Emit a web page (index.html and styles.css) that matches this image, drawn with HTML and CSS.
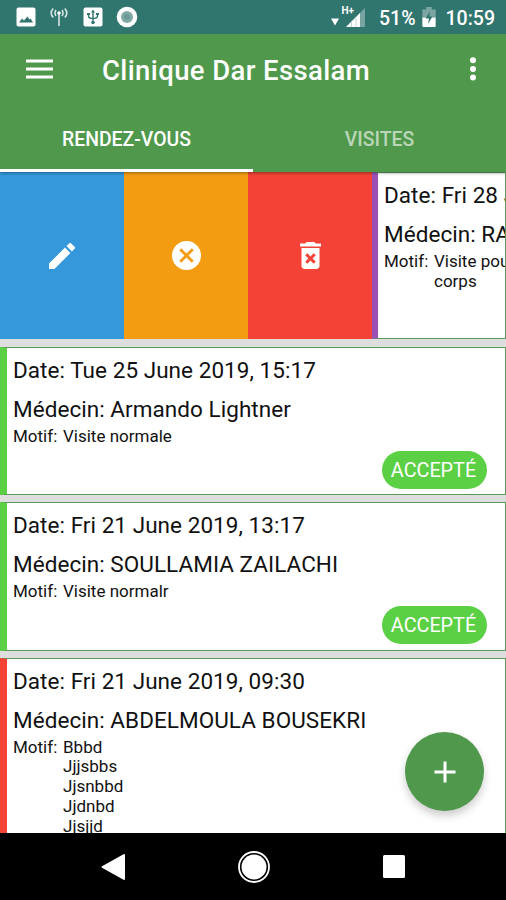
FILE: index.html
```html
<!DOCTYPE html>
<html lang="fr">
<head>
<meta charset="utf-8">
<title>Clinique Dar Essalam</title>
<link rel="stylesheet" href="styles.css">
</head>
<body>
<div class="screen">
  <header class="status">
    <div class="status-left">
      <svg width="20" height="20" viewBox="0 0 20 20"><rect x=".5" y=".5" width="19" height="19" rx="2" fill="#fff"/><path d="M3 15.500l3-4 2 2 3.500-4 2 3 1-1 2.500 4z" fill="#31756f"/></svg>
      <svg class="antenna" width="18" height="20" viewBox="0 0 18 20" fill="none" stroke="#d5e5e3" stroke-width="1.600"><path d="M9 6v13M6 3q-2 3 0 6M3.200 1.500q-4 4.500 0 9M12 3q2 3 0 6M14.800 1.500q4 4.500 0 9"/><circle cx="9" cy="6" r="1.800" fill="#fff" stroke="none"/></svg>
      <svg class="usb" width="20" height="20" viewBox="0 0 20 20"><rect x=".5" y=".5" width="19" height="19" rx="2" fill="#fff"/><path d="M10 4v11M5.500 6v3q0 2.500 4.500 2.500t4.500-2.500V6" fill="none" stroke="#31756f" stroke-width="1.400"/><path d="M8 5.500L10 2.500l2 3zM4 6h3v2H4zM13 6h3v2h-3z" fill="#31756f"/><circle cx="10" cy="15.500" r="1.800" fill="#31756f"/></svg>
      <svg class="disc" width="22" height="22" viewBox="0 0 22 22"><circle cx="11" cy="11" r="10.300" fill="#fff"/><circle cx="11" cy="11" r="6" fill="#82aaa6"/><circle cx="11" cy="11" r="3" fill="#6d9b97"/></svg>
    </div>
    <div class="status-right">
      <svg class="signal" width="36" height="24" viewBox="0 0 36 24"><path d="M0 13.500h8l-4 7z" fill="#fff"/><path d="M15 22L34 3v19z" fill="#78a3a0"/><path d="M15 22L29 8v14z" fill="#fff"/><path d="M20.500 16v6M25 12v10" stroke="#c0d5d3" stroke-width="1"/><text x="10.500" y="9" class="network">H+</text></svg>
      <span class="percent">51%</span>
      <svg class="battery" width="14" height="20" viewBox="0 0 14 21"><path d="M4 0h6v2.500h4V11H0V2.500h4z" fill="#7ba5a2"/><path d="M0 11h14v9q0 1-1 1H1q-1 0-1-1z" fill="#fff"/><path d="M8 4.500L3.500 12H7l-1 6 4.500-8H7.500z" fill="#31756f"/></svg>
      <span class="clock">10:59</span>
    </div>
  </header>
  <div class="appbar">
    <svg class="menu" width="27" height="20" viewBox="0 0 27 20"><path d="M0 2h27M0 10h27M0 18h27" stroke="#fff" stroke-width="2.800"/></svg>
    <h1 class="title">Clinique Dar Essalam</h1>
    <svg class="more" width="8" height="24" viewBox="0 0 8 24" fill="#fff"><circle cx="4" cy="3.300" r="3"/><circle cx="4" cy="12" r="3"/><circle cx="4" cy="20.500" r="3"/></svg>
  </div>
  <nav class="tabs">
    <div class="tab active">RENDEZ-VOUS</div>
    <div class="tab">VISITES</div>
  </nav>
  <main class="list">
    <section class="swipe">
      <div class="action edit"><svg width="26" height="26" viewBox="3 3 18 18" fill="#fff"><path d="M3 17.250V21h3.750L17.810 9.940l-3.750-3.750zM20.710 7.040a1 1 0 0 0 0-1.410l-2.340-2.340a1 1 0 0 0-1.410 0l-1.830 1.830 3.750 3.750z"/></svg></div>
      <div class="action cancel"><svg width="29" height="29" viewBox="2 2 20 20" fill="#fff"><path d="M12 2a10 10 0 1 0 0 20 10 10 0 0 0 0-20zm5 13.590L15.590 17 12 13.410 8.410 17 7 15.590 10.590 12 7 8.410 8.410 7 12 10.590 15.590 7 17 8.410 13.410 12z"/></svg></div>
      <div class="action delete"><svg width="21" height="27" viewBox="5 3 14 18" fill="#fff"><path d="M6 19c0 1.100.9 2 2 2h8c1.100 0 2-.9 2-2V7H6zm2.460-7.120l1.410-1.410L12 12.590l2.120-2.120 1.410 1.410L13.410 14l2.120 2.120-1.410 1.410L12 15.410l-2.120 2.120-1.410-1.410L10.590 14zM15.500 4l-1-1h-5l-1 1H5v2h14V4z"/></svg></div>
      <article class="card pending">
        <p class="line date">Date: Fri 28 J</p>
        <p class="line doctor">Médecin: RA</p>
        <div class="reason"><span class="label">Motif:</span><span>Visite pou<br>corps</span></div>
      </article>
    </section>
    <article class="card accepted">
      <p class="line date">Date: Tue 25 June 2019, 15:17</p>
      <p class="line doctor">Médecin: Armando Lightner</p>
      <div class="reason"><span class="label">Motif:</span><span>Visite normale</span></div>
      <span class="badge">ACCEPTÉ</span>
    </article>
    <article class="card accepted">
      <p class="line date">Date: Fri 21 June 2019, 13:17</p>
      <p class="line doctor">Médecin: SOULLAMIA ZAILACHI</p>
      <div class="reason"><span class="label">Motif:</span><span>Visite normalr</span></div>
      <span class="badge">ACCEPTÉ</span>
    </article>
    <article class="card refused">
      <p class="line date">Date: Fri 21 June 2019, 09:30</p>
      <p class="line doctor">Médecin: ABDELMOULA BOUSEKRI</p>
      <div class="reason"><span class="label">Motif:</span><span>Bbbd<br>Jjjsbbs<br>Jjsnbbd<br>Jjdnbd<br>Jjsjjd</span></div>
    </article>
    <div class="fab"><svg width="22" height="22" viewBox="0 0 22 22"><path d="M11 .5v21M.5 11h21" stroke="#fff" stroke-width="3"/></svg></div>
  </main>
  <footer class="navbar">
    <svg class="back" width="25" height="28" viewBox="0 0 25 28"><path d="M1.500 14L23 2v24z" fill="#fff" stroke="#fff" stroke-width="2" stroke-linejoin="round"/></svg>
    <svg class="home" width="34" height="34" viewBox="0 0 34 34"><circle cx="17" cy="17" r="15" fill="none" stroke="#fff" stroke-width="1.800"/><circle cx="17" cy="17" r="12.500" fill="#fff"/></svg>
    <svg class="recent" width="22" height="23" viewBox="0 0 22 23"><rect width="22" height="23" rx="1.500" fill="#fff"/></svg>
  </footer>
</div>
</body>
</html>
```
FILE: styles.css
```css
* { box-sizing: border-box; }
body { margin: 0; font-family: Roboto, sans-serif; color: #111; background: #000; }
svg { display: block; flex: none; }
.screen { width: 506px; height: 900px; display: flex; flex-direction: column; overflow: hidden; }
.status { height: 34px; flex: none; background: #31756f; display: flex; justify-content: space-between; padding: 0 11px 0 16px; color: #fff; }
.status-left, .status-right { display: flex; align-items: center; }
.antenna { margin-left: 14px; }
.usb { margin-left: 15px; }
.disc { margin-left: 13px; }
.network { font: 700 10px Roboto, sans-serif; fill: #fff; }
.percent, .clock { font-size: 19.5px; font-weight: 500; line-height: 34px; padding-top: 3px; }
.signal { margin-right: 12px; }
.battery { margin: 0 10px 0 6px; }
.appbar { height: 70px; flex: none; background: #50984c; display: flex; align-items: center; padding: 0 29px 0 26px; position: relative; z-index: 2; }
.title { margin: 4px auto 0 49px; font-size: 27.5px; letter-spacing: .38px; line-height: 34px; font-weight: 500; color: #fff; white-space: nowrap; }
.tabs { height: 68px; flex: none; background: #50984c; display: flex; position: relative; z-index: 1; box-shadow: 0 1px 3px rgba(0,0,0,.4); }
.tab { flex: 1; text-align: center; font-size: 19.4px; font-weight: 500; line-height: 71px; color: #b9d6b7; }
.active { color: #fff; border-bottom: 3px solid #fff; }
.list { flex: 1; min-height: 0; background: #dedede; display: flex; flex-direction: column; gap: 7px; overflow: hidden; position: relative; }
.swipe { height: 167px; margin-bottom: 1px; flex: none; display: flex; overflow: hidden; }
.action { width: 124px; flex: none; display: flex; align-items: center; justify-content: center; }
.edit { background: #3498db; }
.cancel { background: #f39c12; }
.delete { background: #f44336; }
.card { height: 148.3px; flex: none; background: #fff; border: 1px solid #5b9a59; border-left: 7px solid #5bd044; padding: 9px 18px 0 6px; display: flex; flex-direction: column; }
.swipe .card { width: 134px; height: 167px; border-left: 6px solid #9b50b6; padding-right: 0; overflow: hidden; }
.refused { height: 200px; border-left-color: #f44336; }
.line { margin: 0 0 12px; font-size: 22.5px; letter-spacing: .05px; line-height: 27px; white-space: nowrap; }
.doctor { margin-bottom: 4px; }
.reason { display: flex; font-size: 17px; line-height: 19.8px; white-space: nowrap; }
.label { width: 50px; flex: none; }
.badge { align-self: flex-end; margin-top: 4px; width: 105px; height: 38px; border-radius: 19px; background: #5bd044; color: #fff; font-size: 19.8px; line-height: 39px; padding-right: 2px; text-align: center; }
.fab { position: absolute; left: 405px; top: 560px; width: 79px; height: 79px; border-radius: 50%; background: #50984c; box-shadow: 0 5px 8px rgba(0,0,0,.2); display: flex; align-items: center; justify-content: center; }
.navbar { height: 67px; flex: none; background: #000; display: flex; align-items: center; padding-left: 101px; }
.home { margin-left: 111px; }
.recent { margin-left: 112px; }
```
